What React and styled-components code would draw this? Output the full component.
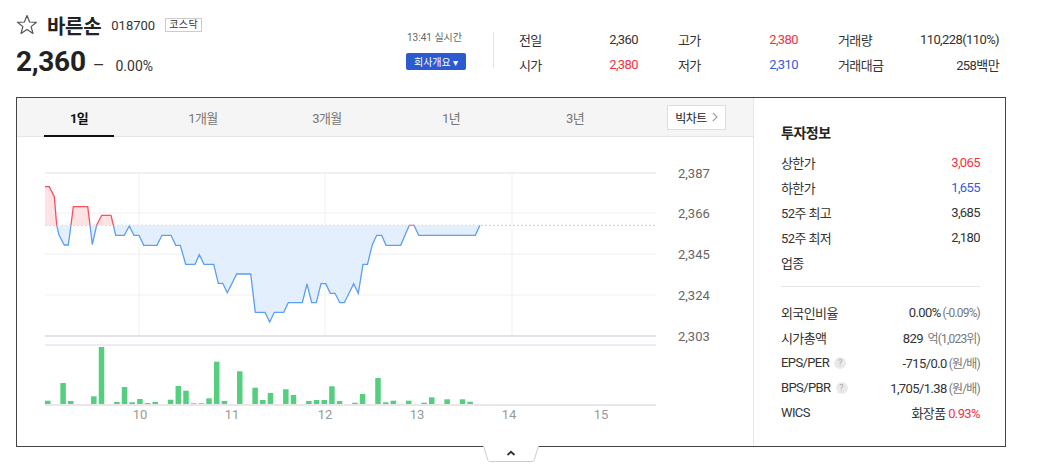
import React from 'react';
import styled, { createGlobalStyle } from 'styled-components';

const GlobalStyle = createGlobalStyle`
  body {
    margin: 0;
    background: #fff;
    font-family: Roboto, "Noto Sans CJK KR", sans-serif;
    color: #333;
  }
`;

const RED = '#f5333f';
const BLUE = '#3a5bd8';

const Page = styled.div`
  width: 1047px;
  padding-left: 16px;
  box-sizing: border-box;
`;

const Header = styled.div`
  display: flex;
  align-items: flex-start;
  height: 97px;
`;

const TitleBlock = styled.div`
  width: 390px;
`;

const TitleRow = styled.div`
  display: flex;
  align-items: center;
  margin-top: 14px;
  height: 22px;
`;

const Name = styled.span`
  font-size: 20px;
  font-weight: 700;
  letter-spacing: -0.3px;
  color: #222;
  margin-left: 9px;
`;

const Code = styled.span`
  font-size: 13px;
  color: #333;
  margin-left: 10px;
`;

const Badge = styled.span`
  margin-left: 10px;
  border: 1px solid #ccc;
  font-size: 10px;
  line-height: 12px;
  padding: 0 3px;
  letter-spacing: 0.5px;
  color: #333;
`;

const PriceRow = styled.div`
  display: flex;
  align-items: baseline;
  margin-top: 9px;
`;

const Price = styled.span`
  font-size: 28px;
  font-weight: 700;
  color: #222;
  letter-spacing: -0.3px;
`;

const Dash = styled.span`
  font-size: 18px;
  color: #333;
  margin-left: 7px;
`;

const Rate = styled.span`
  font-size: 14px;
  color: #333;
  margin-left: 11px;
`;

const TimeBlock = styled.div`
  width: 62px;
  margin-top: 31px;
  display: flex;
  flex-direction: column;
  align-items: flex-start;
`;

const TimeText = styled.span`
  font-size: 10px;
  line-height: 13px;
  color: #666;
  margin-left: 1px;
`;

const CompanyButton = styled.button`
  margin-top: 9px;
  width: 60px;
  height: 17px;
  border: 0;
  border-radius: 2px;
  padding: 0;
  background: #2b5bce;
  color: #fff;
  font-family: "Noto Sans CJK KR", sans-serif;
  font-size: 10px;
  line-height: 17px;
`;

const Divider = styled.div`
  width: 1px;
  height: 36px;
  margin: 32px 25px 0;
  background: #e5e5e5;
`;

const Stats = styled.div`
  display: grid;
  grid-template-columns: 119px 120px 161px;
  grid-auto-rows: 25px;
  column-gap: 40px;
  margin-top: 27px;
`;

const Stat = styled.div`
  display: flex;
  justify-content: space-between;
  align-items: center;
  font-size: 13px;
  letter-spacing: -0.6px;
`;

const Value = styled.span`
  color: ${(p) => p.$color || '#333'};
`;

const Box = styled.div`
  width: 990px;
  height: 350px;
  box-sizing: border-box;
  border: 1px solid #444;
  display: flex;
`;

const ChartArea = styled.div`
  width: 736px;
  display: flex;
  flex-direction: column;
`;

const Tabs = styled.div`
  height: 38px;
  display: flex;
  align-items: center;
  background: #f5f5f5;
  border-bottom: 1px solid #e6e6e6;
`;

const Tab = styled.div`
  position: relative;
  width: 124px;
  height: 38px;
  display: flex;
  align-items: center;
  justify-content: center;
  font-size: 13px;
  letter-spacing: -0.6px;
  color: ${(p) => (p.$active ? '#111' : '#777')};
  font-weight: ${(p) => (p.$active ? 700 : 400)};

  &::after {
    content: '';
    display: ${(p) => (p.$active ? 'block' : 'none')};
    position: absolute;
    left: 27px;
    bottom: -1px;
    width: 70px;
    height: 2px;
    background: #111;
  }
`;

const BigChart = styled.div`
  margin-left: auto;
  margin-right: 27px;
  width: 59px;
  height: 25px;
  box-sizing: border-box;
  border: 1px solid #ddd;
  background: #fff;
  display: flex;
  align-items: center;
  justify-content: center;
  gap: 5px;
  font-size: 12px;
  letter-spacing: -0.5px;
  color: #222;
`;

const Panel = styled.div`
  flex: 1;
  border-left: 1px solid #e6e6e6;
  padding: 25px 25px 0 27px;
`;

const PanelTitle = styled.div`
  font-size: 14px;
  font-weight: 700;
  line-height: 20px;
  letter-spacing: -0.5px;
  color: #222;
`;

const InfoList = styled.div`
  margin-top: ${(p) => p.$top}px;
`;

const InfoRow = styled.div`
  height: 25px;
  display: flex;
  align-items: center;
  justify-content: space-between;
  font-size: 13px;
  letter-spacing: -0.6px;
`;

const InfoLabel = styled.span`
  display: flex;
  align-items: center;
  gap: 5px;
  color: #333;
`;

const Sub = styled.span`
  color: #777;
  font-size: 12px;
  letter-spacing: -0.8px;
  margin-left: 2px;
`;

const Help = styled.span`
  width: 12px;
  height: 12px;
  border-radius: 50%;
  background: #eaeaea;
  color: #aaa;
  font-size: 9px;
  line-height: 12px;
  text-align: center;
  letter-spacing: 0;
`;

const Rule = styled.div`
  height: 1px;
  background: #e5e5ea;
  margin-top: 11px;
`;

const ToggleWrap = styled.div`
  width: 990px;
  display: flex;
  justify-content: center;
  margin-top: -1px;
`;

const StarIcon = () => (
  <svg width="22" height="22" viewBox="0 0 22 22">
    <polygon
      points="11,1.5 13.6,8 20.5,8.3 15.1,12.6 17,19.5 11,15.6 5,19.5 6.9,12.6 1.5,8.3 8.4,8"
      fill="none"
      stroke="#555"
      strokeWidth="1.2"
      strokeLinejoin="round"
    />
  </svg>
);

const ChevronIcon = () => (
  <svg width="6" height="10" viewBox="0 0 6 10">
    <path d="M0.8 0.8 L5 5 L0.8 9.2" fill="none" stroke="#999" strokeWidth="1.1" />
  </svg>
);

const price = [[45,186.7],[49.3,186.7],[54.3,196.7],[56.7,225.3],[59,235],[64.3,245],[68.3,245],[71,225],[73.3,206.7],[87.7,206.7],[90,225],[92.3,244.7],[96.7,225],[101.7,215.3],[111,215.3],[113.3,225],[115.7,235.3],[124.3,235.3],[129.3,226],[134,235.3],[139,235.3],[143.7,245.3],[157,245.3],[162,235.3],[171,235.3],[175.7,245.3],[180.3,245.3],[185.7,264.3],[195,264.3],[199.3,254.7],[204,264.3],[213.7,264.3],[218.3,283.3],[222.7,283.3],[227.3,292.7],[236.7,274],[250.7,274],[255.3,312.3],[265,312.3],[269.7,322],[274.3,312.3],[283.7,312.3],[288.3,302.7],[302.3,302.7],[307,284],[311.7,302.7],[316.3,302.7],[321,283.7],[325.7,283.7],[330.3,293.3],[335,293.3],[339.7,302.7],[344.3,302.7],[353.7,283.7],[358.3,293.3],[363,264.3],[367.5,264.3],[372.3,244.7],[376.7,235.3],[381.7,235.3],[386,245.3],[400.7,245.3],[409.3,225.3],[414,225.3],[418.7,235.3],[475.3,235.3],[480,225.3]];

const bars = [[0,3.3],[2,21],[3,3],[6,7.7],[7,57],[9,2],[10,17],[11,1.7],[12,5],[13,1],[14,2],[16,4.3],[17,18],[18,13.3],[19,0.7],[20,0.7],[21,5.7],[22,42.3],[23,3],[25,32.7],[27,16.3],[28,4],[29,11],[31,14.7],[32,9],[34,3],[35,4],[36,4],[37,17.7],[38,3],[40,1.3],[41,10],[43,26],[44,1.7],[45,3.3],[47,3.3],[49,1.3],[50,6.7],[52,4.7],[54,4.7],[55,2.3]];

const BASE = 225.3;
const priceLabels = [['2,387', 173], ['2,366', 213], ['2,345', 254], ['2,324', 295], ['2,303', 336]];
const hours = [['10', 140], ['11', 232], ['12', 325], ['13', 417], ['14', 509], ['15', 601]];

const Chart = () => {
  const line = price.map((p) => p.join(',')).join(' ');
  const area = `${line} 480,${BASE} 45,${BASE}`;
  return (
    <svg width="736" height="309" viewBox="17 137 736 309">
      <defs>
        <clipPath id="up"><rect x="0" y="0" width="800" height={BASE} /></clipPath>
        <clipPath id="down"><rect x="0" y={BASE} width="800" height="300" /></clipPath>
      </defs>
      <line x1="45" x2="656" y1="173" y2="173" stroke="#e2e2e8" />
      {[213, 254, 295].map((y) => (
        <line key={y} x1="45" x2="656" y1={y} y2={y} stroke="#f0f0f3" />
      ))}
      {[139, 325, 512].map((x) => (
        <line key={x} x1={x} x2={x} y1="173" y2="335" stroke="#eff0f4" />
      ))}
      <line x1="45" x2="656" y1="336" y2="336" stroke="#e2e3ea" strokeWidth="2" />
      <line x1="45" x2="656" y1="345" y2="345" stroke="#ececf1" strokeWidth="2" />
      <line x1="45" x2="656" y1={BASE} y2={BASE} stroke="#bbb" strokeDasharray="2 2" strokeWidth="0.8" />
      <polygon points={area} fill="#fde3e6" clipPath="url(#up)" />
      <polygon points={area} fill="#e3effd" clipPath="url(#down)" />
      <polyline points={line} fill="none" stroke="#ff4d5a" strokeWidth="1.3" clipPath="url(#up)" />
      <polyline points={line} fill="none" stroke="#5a9ef5" strokeWidth="1.3" clipPath="url(#down)" />
      {priceLabels.map(([t, y]) => (
        <text key={t} x="678" y={y + 4.5} fontSize="13" fill="#666" fontFamily="Roboto, sans-serif">{t}</text>
      ))}
      {bars.map(([s, h]) => (
        <rect key={s} x={45 + s * 7.68} y={404 - h} width="5.5" height={h} fill="#53cf7f" />
      ))}
      <line x1="45" x2="656" y1="405" y2="405" stroke="#e0e0e6" strokeWidth="1.5" />
      {hours.map(([t, x]) => (
        <text key={t} x={x} y="419" fontSize="13" fill="#999" textAnchor="middle" fontFamily="Roboto, sans-serif">{t}</text>
      ))}
    </svg>
  );
};

const stats = [
  ['전일', '2,360'],
  ['고가', '2,380', RED],
  ['거래량', '110,228(110%)'],
  ['시가', '2,380', RED],
  ['저가', '2,310', BLUE],
  ['거래대금', '258백만'],
];

const tabs = ['1일', '1개월', '3개월', '1년', '3년'];

export default function App() {
  return (
    <Page>
      <GlobalStyle />
      <Header>
        <TitleBlock>
          <TitleRow>
            <StarIcon />
            <Name>바른손</Name>
            <Code>018700</Code>
            <Badge>코스닥</Badge>
          </TitleRow>
          <PriceRow>
            <Price>2,360</Price>
            <Dash>–</Dash>
            <Rate>0.00%</Rate>
          </PriceRow>
        </TitleBlock>
        <TimeBlock>
          <TimeText>13:41 실시간</TimeText>
          <CompanyButton>회사개요 ▾</CompanyButton>
        </TimeBlock>
        <Divider />
        <Stats>
          {stats.map(([label, value, color]) => (
            <Stat key={label}>
              <span>{label}</span>
              <Value $color={color}>{value}</Value>
            </Stat>
          ))}
        </Stats>
      </Header>

      <Box>
        <ChartArea>
          <Tabs>
            {tabs.map((t, i) => (
              <Tab key={t} $active={i === 0}>{t}</Tab>
            ))}
            <BigChart>빅차트<ChevronIcon /></BigChart>
          </Tabs>
          <Chart />
        </ChartArea>
        <Panel>
          <PanelTitle>투자정보</PanelTitle>
          <InfoList $top={7}>
            <InfoRow><InfoLabel>상한가</InfoLabel><Value $color={RED}>3,065</Value></InfoRow>
            <InfoRow><InfoLabel>하한가</InfoLabel><Value $color={BLUE}>1,655</Value></InfoRow>
            <InfoRow><InfoLabel>52주 최고</InfoLabel><Value>3,685</Value></InfoRow>
            <InfoRow><InfoLabel>52주 최저</InfoLabel><Value>2,180</Value></InfoRow>
            <InfoRow><InfoLabel>업종</InfoLabel></InfoRow>
          </InfoList>
          <Rule />
          <InfoList $top={13}>
            <InfoRow><InfoLabel>외국인비율</InfoLabel><Value>0.00%<Sub>(-0.09%)</Sub></Value></InfoRow>
            <InfoRow><InfoLabel>시가총액</InfoLabel><Value>829 <Sub>억(1,023위)</Sub></Value></InfoRow>
            <InfoRow><InfoLabel>EPS/PER<Help>?</Help></InfoLabel><Value>-715/0.0<Sub>(원/배)</Sub></Value></InfoRow>
            <InfoRow><InfoLabel>BPS/PBR<Help>?</Help></InfoLabel><Value>1,705/1.38<Sub>(원/배)</Sub></Value></InfoRow>
            <InfoRow><InfoLabel>WICS</InfoLabel><Value>화장품 <Value $color={RED}>0.93%</Value></Value></InfoRow>
          </InfoList>
        </Panel>
      </Box>
      <ToggleWrap>
        <svg width="56" height="16" viewBox="0 0 56 16">
          <path d="M0.5 0 L5 14.5 Q5.5 15.5 7 15.5 L49 15.5 Q50.5 15.5 51 14.5 L55.5 0" fill="#fff" stroke="#ccc" />
          <path d="M24.5 9 L28 5.8 L31.5 9" fill="none" stroke="#333" strokeWidth="1.8" />
        </svg>
      </ToggleWrap>
    </Page>
  );
}
